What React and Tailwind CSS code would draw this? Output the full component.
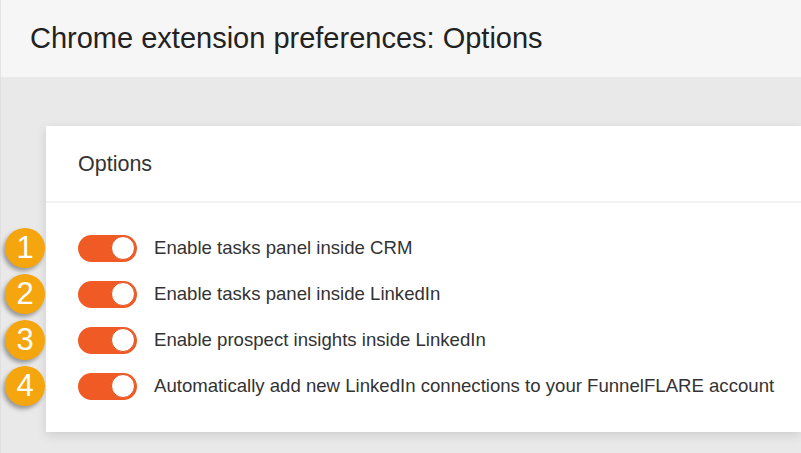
const options = [
  "Enable tasks panel inside CRM",
  "Enable tasks panel inside LinkedIn",
  "Enable prospect insights inside LinkedIn",
  "Automatically add new LinkedIn connections to your FunnelFLARE account",
];

function Toggle() {
  return (
    <div className="w-[59px] h-[27px] rounded-full bg-[#f05a24] flex items-center justify-end pr-[2px] shrink-0">
      <div className="w-[24px] h-[24px] rounded-full bg-white border border-[#e0521f]" />
    </div>
  );
}

export default function App() {
  return (
    <div
      className="w-[801px] h-[453px] bg-[#e9e9e9] overflow-hidden flex flex-col"
      style={{ fontFamily: "'Liberation Sans', Arial, sans-serif" }}
    >
      {/* header */}
      <div className="h-[77px] bg-[#f6f6f6] border-l border-[#e4e4e4] flex items-center pl-[29px] shrink-0">
        <h1 className="text-[29px] text-[#222]">Chrome extension preferences: Options</h1>
      </div>

      {/* body */}
      <div className="flex-1 pt-[49px] pl-[45px] border-l border-[#e0e0e0]">
        <div className="bg-white h-[306px] shadow-[0_3px_10px_rgba(0,0,0,0.12)]">
          <div className="h-[77px] flex items-center pl-[32px] pt-[2px] border-b-2 border-[#f2f2f2]">
            <span className="text-[21.5px] text-[#333]">Options</span>
          </div>
          <div className="pt-[22px]">
            {options.map((label, i) => (
              <div key={i} className="relative h-[46px] flex items-center pl-[32px] gap-[17px]">
                <div className="absolute left-[-41px] top-[3px] w-[40px] h-[40px] rounded-full bg-[#f5a50d] text-white text-[31px] flex items-center justify-center shadow-[-2px_3px_4px_rgba(0,0,0,0.35)]">
                  {i + 1}
                </div>
                <Toggle />
                <span className="text-[18.6px] text-[#333]">{label}</span>
              </div>
            ))}
          </div>
        </div>
      </div>
    </div>
  );
}
